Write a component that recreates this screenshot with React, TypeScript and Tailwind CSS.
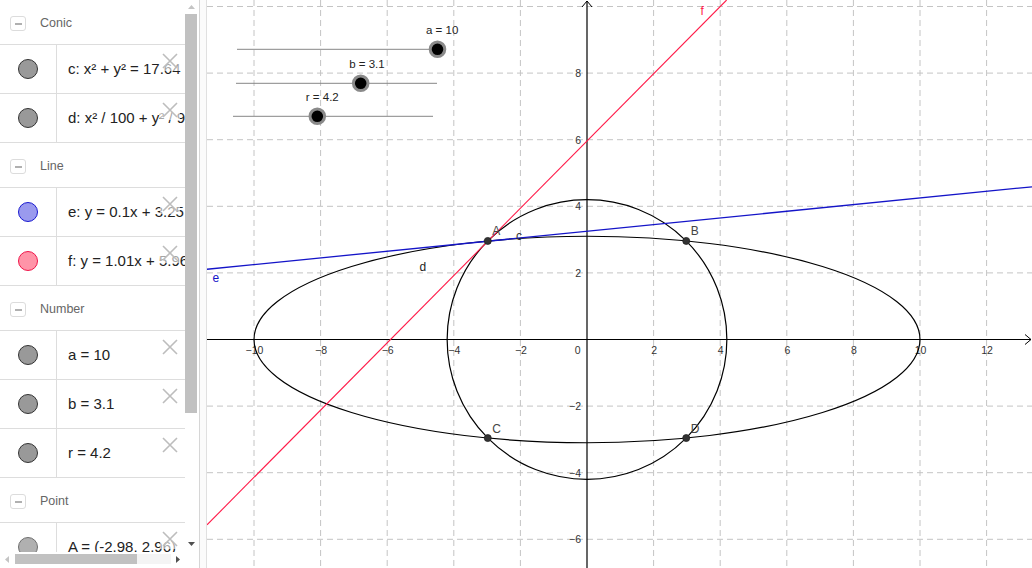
import React from "react";

type Row = { dot: string; label: string };
type Group = { title: string; rows: Row[] };

const gray = "bg-[#999999] border-[#333333]";

const groups: Group[] = [
  {
    title: "Conic",
    rows: [
      { dot: gray, label: "c: x² + y² = 17.64" },
      { dot: gray, label: "d: x² / 100 + y² / 9.61" },
    ],
  },
  {
    title: "Line",
    rows: [
      { dot: "bg-[#9a9aee] border-[#1a1ad0]", label: "e: y = 0.1x + 3.25" },
      { dot: "bg-[#ff94a8] border-[#f0164a]", label: "f: y = 1.01x + 5.96" },
    ],
  },
  {
    title: "Number",
    rows: [
      { dot: gray, label: "a = 10" },
      { dot: gray, label: "b = 3.1" },
      { dot: gray, label: "r = 4.2" },
    ],
  },
  {
    title: "Point",
    rows: [{ dot: "bg-[#b0b0b0] border-[#6e6e6e]", label: "A = (-2.98, 2.96)" }],
  },
];

function Cross() {
  return (
    <svg width="16" height="16" viewBox="0 0 16 16">
      <path d="M1 1L15 15M15 1L1 15" stroke="#bdbdbd" strokeWidth="1.6" fill="none" />
    </svg>
  );
}

function GroupHeader({ title }: { title: string }) {
  return (
    <div className="h-[45px] shrink-0 border-b border-[#dddddd] flex items-center pt-[3px]">
      <div className="ml-[10px] w-[16px] h-[15px] rounded-[3px] border border-[#dcdcdc] flex items-center justify-center">
        <div className="w-[7px] h-[2px] bg-[#b0b0b0]" />
      </div>
      <span className="ml-[14px] text-[12.5px] text-[#666666]">{title}</span>
    </div>
  );
}

function ItemRow({ row }: { row: Row }) {
  return (
    <div className="h-[49px] shrink-0 border-b border-[#dddddd] flex">
      <div className="w-[57px] shrink-0 border-r border-[#dddddd] flex items-center justify-center">
        <div className={`w-[20px] h-[20px] rounded-full border ${row.dot}`} />
      </div>
      <div className="relative flex-1 min-w-0 overflow-hidden flex items-center pl-[11px]">
        <span className="whitespace-nowrap text-[15px] text-[#222222]">{row.label}</span>
        <div className="absolute right-[5px] top-[6px] w-[20px] h-[20px] bg-white/60 flex items-center justify-center">
          <Cross />
        </div>
      </div>
    </div>
  );
}

function Tri({ dir, color }: { dir: "up" | "down" | "left" | "right"; color: string }) {
  const d = {
    up: "M0 4L3.5 0L7 4Z",
    down: "M0 0L7 0L3.5 4Z",
    left: "M4 0L4 7L0 3.5Z",
    right: "M0 0L4 3.5L0 7Z",
  }[dir];
  const vertical = dir === "up" || dir === "down";
  return (
    <svg width={vertical ? 7 : 4} height={vertical ? 4 : 7} viewBox={vertical ? "0 0 7 4" : "0 0 4 7"}>
      <path d={d} fill={color} />
    </svg>
  );
}

function AlgebraPanel() {
  return (
    <div className="w-[197px] h-full flex flex-col shrink-0">
      <div className="h-[552px] flex">
        <div className="w-[185px] h-full overflow-hidden flex flex-col">
          {groups.map(g => (
            <React.Fragment key={g.title}>
              <GroupHeader title={g.title} />
              {g.rows.map(r => (
                <ItemRow key={r.label} row={r} />
              ))}
            </React.Fragment>
          ))}
        </div>
        {/* vertical scrollbar */}
        <div className="w-[12px] h-full flex flex-col">
          <div className="h-[14px] flex items-center justify-center">
            <Tri dir="up" color="#c4c4c4" />
          </div>
          <div className="h-[399px] bg-[#c1c1c1]" />
          <div className="flex-1" />
          <div className="h-[16px] flex items-center justify-center">
            <Tri dir="down" color="#505050" />
          </div>
        </div>
      </div>
      {/* horizontal scrollbar */}
      <div className="h-[16px] flex">
        <div className="w-[185px] flex items-start pt-[2px]">
          <div className="w-[14px] h-[10px] flex items-center justify-center">
            <Tri dir="left" color="#c4c4c4" />
          </div>
          <div className="w-[1px]" />
          <div className="w-[122px] h-[10px] bg-[#c1c1c1]" />
          <div className="flex-1 h-[10px] bg-[#f4f4f4]" />
          <div className="w-[14px] h-[10px] flex items-center justify-center">
            <Tri dir="right" color="#505050" />
          </div>
        </div>
        <div className="flex-1" />
      </div>
    </div>
  );
}

const S = 33.3;
const OX = 587;
const OY = 339.5;
const X = (v: number) => OX + v * S;
const Y = (v: number) => OY - v * S;
const toX = (p: number) => (p - OX) / S;

const xTicks = [-10, -8, -6, -4, -2, 2, 4, 6, 8, 10, 12];
const yTicks = [8, 6, 4, 2, -2, -4, -6];
const gridX = [-10, -8, -6, -4, -2, 2, 4, 6, 8, 10, 12];
const gridY = [10, 8, 6, 4, 2, -2, -4, -6];

const fmt = (n: number) => (n < 0 ? "\u2212" + Math.abs(n) : String(n));

const points = [
  { name: "A", x: -2.98, y: 2.96 },
  { name: "B", x: 2.98, y: 2.96 },
  { name: "C", x: -2.98, y: -2.96 },
  { name: "D", x: 2.98, y: -2.96 },
];

const sliders = [
  { label: "a = 10", x1: 237, x2: 437, y: 49.3, p: 437.5 },
  { label: "b = 3.1", x1: 236, x2: 437, y: 83.3, p: 360.7 },
  { label: "r = 4.2", x1: 233, x2: 433, y: 116.3, p: 317.3 },
];

function Graphics() {
  const left = 207;
  const right = 1032;
  const ey = (p: number) => Y(0.1 * toX(p) + 3.25);
  // where f crosses the top edge of the view
  const fTopX = X((OY / S - 5.96) / 1.01);
  return (
    <div className="flex-1 h-full border-l border-[#e0e0e0] bg-white">
      <svg
        width="825"
        height="568"
        viewBox="207 0 825 568"
        className="block font-['Liberation_Sans',Arial,sans-serif]"
      >
        {/* grid */}
        {gridX.map(v => (
          <line key={"gx" + v} x1={X(v)} y1={0} x2={X(v)} y2={568} stroke="#c4c4c4" strokeWidth="1" strokeDasharray="6 4" />
        ))}
        {gridY.map(v => (
          <line key={"gy" + v} x1={left} y1={Y(v)} x2={right} y2={Y(v)} stroke="#c4c4c4" strokeWidth="1" strokeDasharray="6 4" />
        ))}

        {/* axes */}
        <line x1={left} y1={OY} x2={1031} y2={OY} stroke="#000" strokeWidth="1.2" />
        <path d={`M1025 ${OY - 5}L1031 ${OY}L1025 ${OY + 5}`} stroke="#000" strokeWidth="1" fill="none" />
        <line x1={OX} y1={568} x2={OX} y2={1} stroke="#000" strokeWidth="1.2" />
        <path d={`M${OX - 5} 7L${OX} 1L${OX + 5} 7`} stroke="#000" strokeWidth="1" fill="none" />

        {/* tick labels */}
        <g fontSize="10.5" fill="#333">
          {xTicks.map(v => (
            <text key={"tx" + v} x={X(v) + 0.5} y={354} textAnchor="middle">
              {fmt(v)}
            </text>
          ))}
          <text x={577.7} y={354} textAnchor="middle">0</text>
          {yTicks.map(v => (
            <text key={"ty" + v} x={581} y={Y(v) + 3.8} textAnchor="end">
              {fmt(v)}
            </text>
          ))}
        </g>

        {/* conics */}
        <circle cx={OX} cy={OY} r={4.2 * S} fill="none" stroke="#000" strokeWidth="1.2" />
        <ellipse cx={OX} cy={OY} rx={10 * S} ry={3.1 * S} fill="none" stroke="#000" strokeWidth="1.2" />

        {/* lines */}
        <line x1={left} y1={ey(left)} x2={right} y2={ey(right)} stroke="#1414c8" strokeWidth="1.3" />
        <line
          x1={left}
          y1={Y(1.01 * toX(left) + 5.96)}
          x2={fTopX}
          y2={0}
          stroke="#ff1a48"
          strokeWidth="1.1"
        />

        {/* labels of objects */}
        <g fontSize="12">
          <text x={516} y={240} fill="#333">c</text>
          <text x={419.5} y={270.5} fill="#222">d</text>
          <text x={212.5} y={282} fill="#1414c8">e</text>
          <text x={700.5} y={15} fill="#ff1a48">f</text>
        </g>

        {/* points */}
        {points.map(p => (
          <g key={p.name}>
            <circle cx={X(p.x)} cy={Y(p.y)} r="3.5" fill="#333" stroke="#222" strokeWidth="0.8" />
            <text x={X(p.x) + 4.5} y={Y(p.y) - 5.5} fontSize="12" fill="#444">
              {p.name}
            </text>
          </g>
        ))}

        {/* sliders */}
        {sliders.map(s => (
          <g key={s.label}>
            <line x1={s.x1} y1={s.y} x2={s.x2} y2={s.y} stroke="#868686" strokeWidth="1" />
            <circle cx={s.p} cy={s.y} r="7.3" fill="#000" stroke="#8a8a8a" strokeWidth="3" />
            <text x={s.p - 11.5} y={s.y - 15.5} fontSize="11.5" fill="#222">
              {s.label}
            </text>
          </g>
        ))}
      </svg>
    </div>
  );
}

export default function App() {
  return (
    <div className="w-[1032px] h-[568px] flex overflow-hidden bg-white font-['Liberation_Sans',Arial,sans-serif]">
      <AlgebraPanel />
      <div className="w-[2px] h-full shrink-0" />
      <div className="w-[7px] h-full shrink-0 border-l border-[#d6d6d6] bg-[#fbfbfb]" />
      <Graphics />
    </div>
  );
}
